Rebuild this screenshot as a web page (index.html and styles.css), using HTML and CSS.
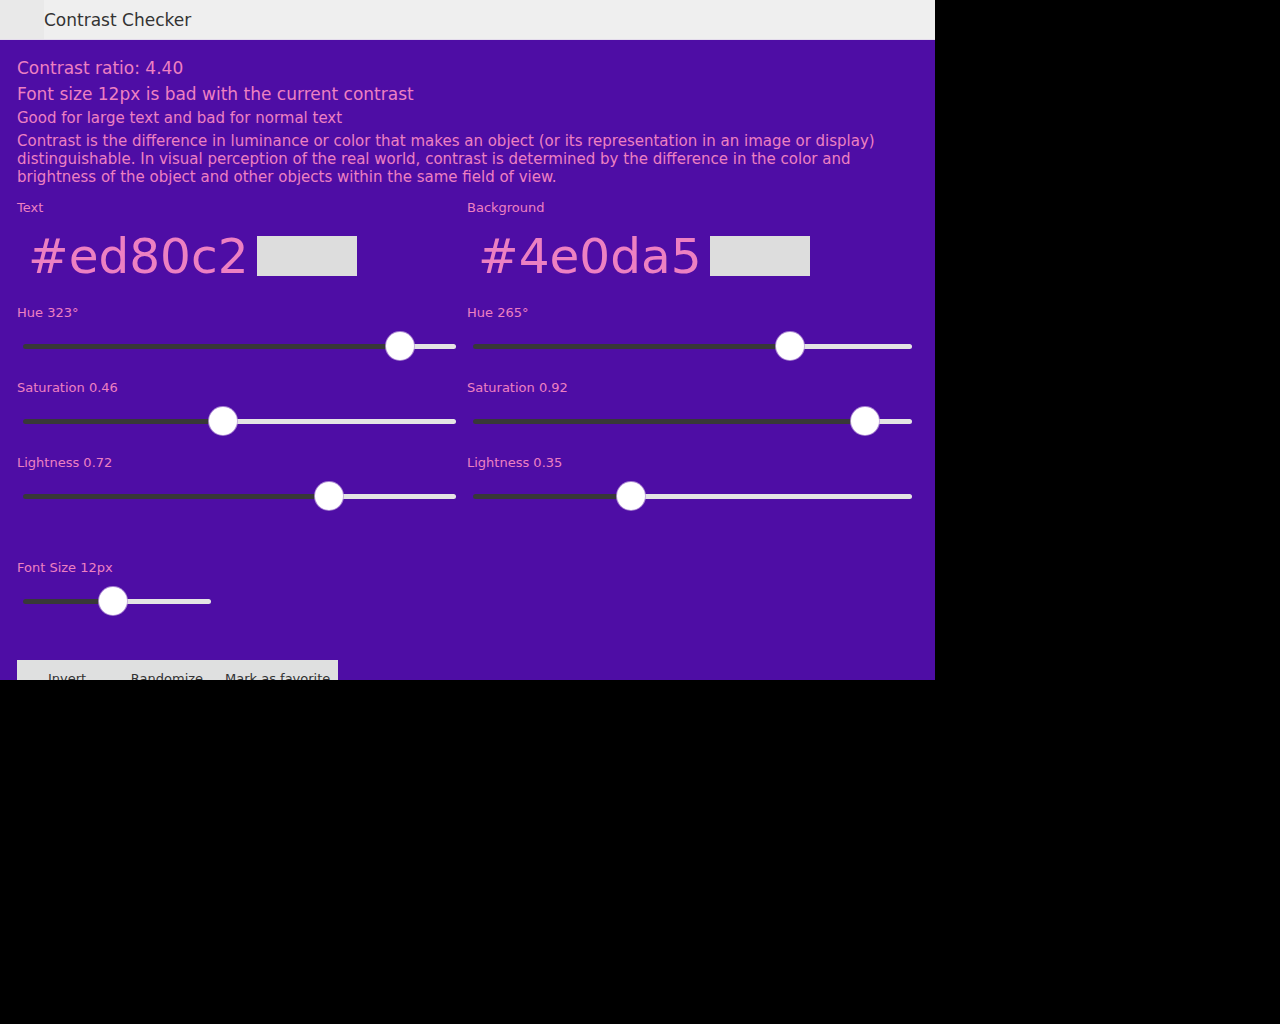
FILE: index.html
```html
<!DOCTYPE html>
<html>
<head>
<meta charset="utf-8">
<title>Contrast Checker</title>
<link rel="stylesheet" href="styles.css">
</head>
<body>
<div class="app">
  <header class="topbar">
    <div class="menu-btn"></div>
    <div class="title">Contrast Checker</div>
  </header>
  <main class="content">
    <div class="ratio">Contrast ratio: 4.40</div>
    <div class="verdict">Font size 12px is bad with the current contrast</div>
    <div class="summary">Good for large text and bad for normal text</div>
    <p class="desc">Contrast is the difference in luminance or color that makes an object (or its representation in an image or display) distinguishable. In visual perception of the real world, contrast is determined by the difference in the color and brightness of the object and other objects within the same field of view.</p>

    <div class="columns">
      <section class="col col-left">
        <div class="label">Text</div>
        <div class="hex-row">
          <span class="hex">#ed80c2</span>
          <span class="swatch"></span>
        </div>
        <div class="label group-first">Hue 323°</div>
        <input class="slider" type="range" min="0" max="360" value="323" style="--p:89.7%">
        <div class="label">Saturation 0.46</div>
        <input class="slider" type="range" min="0" max="1" step="0.01" value="0.46" style="--p:46%">
        <div class="label">Lightness 0.72</div>
        <input class="slider" type="range" min="0" max="1" step="0.01" value="0.72" style="--p:72%">
      </section>
      <section class="col col-right">
        <div class="label">Background</div>
        <div class="hex-row">
          <span class="hex">#4e0da5</span>
          <span class="swatch"></span>
        </div>
        <div class="label group-first">Hue 265°</div>
        <input class="slider" type="range" min="0" max="360" value="265" style="--p:73.6%">
        <div class="label">Saturation 0.92</div>
        <input class="slider" type="range" min="0" max="1" step="0.01" value="0.92" style="--p:92%">
        <div class="label">Lightness 0.35</div>
        <input class="slider" type="range" min="0" max="1" step="0.01" value="0.35" style="--p:35%">
      </section>
    </div>

    <div class="label fontsize-label">Font Size 12px</div>
    <input class="slider slider-small" type="range" min="3" max="22" value="12" style="--p:47.4%">

    <div class="actions">
      <button class="btn">Invert</button>
      <button class="btn">Randomize</button>
      <button class="btn">Mark as favorite</button>
    </div>
  </main>
</div>
</body>
</html>
```
FILE: styles.css
```css
html, body {
  margin: 0;
  padding: 0;
  background: #000;
}

.app {
  width: 935px;
  height: 680px;
  overflow: hidden;
  background: #4e0da5;
  font-family: "DejaVu Sans", Verdana, sans-serif;
  color: #ed80c2;
}

.topbar {
  height: 39px;
  background: #efefef;
  border-bottom: 1px solid #e4dcec;
  display: flex;
  align-items: center;
}

.menu-btn {
  width: 44px;
  height: 39px;
  background: #e9e9e9;
}

.title {
  font-size: 17px;
  color: #333;
}

.content {
  padding: 15px 17px 0 17px;
}

.ratio, .verdict {
  font-size: 17px;
  line-height: 26px;
}

.summary {
  font-size: 15px;
  line-height: 22px;
}

.desc {
  margin: 3px 0 0 0;
  font-size: 15px;
  line-height: 18px;
}

.columns {
  display: grid;
  grid-template-columns: 450px 451px;
  margin-top: 14px;
}

.col-left {
  padding-right: 5px;
}

.label {
  font-size: 13px;
  line-height: 16px;
}

.hex-row {
  display: flex;
  align-items: center;
  height: 56px;
  margin-top: 12px;
  padding-left: 11px;
}

.hex {
  font-size: 48.5px;
  line-height: 56px;
}

.swatch {
  width: 100px;
  height: 40px;
  margin-left: 8px;
  background: #dddddd;
}

.group-first {
  margin-top: 21px;
}

.slider {
  -webkit-appearance: none;
  appearance: none;
  display: block;
  width: calc(100% - 12px);
  height: 30px;
  margin: 10px 6px 19px 6px;
  padding: 0;
  background: transparent;
  outline: none;
}

.slider::-webkit-slider-runnable-track {
  height: 5px;
  border-radius: 3px;
  background: linear-gradient(to right, #383838 0, #383838 var(--p), #e4e4e4 var(--p), #e4e4e4 100%);
}

.slider::-webkit-slider-thumb {
  -webkit-appearance: none;
  appearance: none;
  width: 28px;
  height: 28px;
  margin-top: -11.5px;
  border-radius: 50%;
  background: #fff;
  box-shadow: 0 0 0 1px rgba(190, 160, 220, 0.8);
}

.fontsize-label {
  margin-top: 30px;
}

.slider-small {
  width: 188px;
  margin-bottom: 0;
}

.actions {
  display: flex;
  margin-top: 44px;
  background: #dfe0e0;
  width: fit-content;
}

.btn {
  font-family: "DejaVu Sans", Verdana, sans-serif;
  font-size: 13px;
  color: #333;
  background: #dfe0e0;
  border: none;
  min-width: 100px;
  padding: 11px 8px;
  margin: 0;
}
```
